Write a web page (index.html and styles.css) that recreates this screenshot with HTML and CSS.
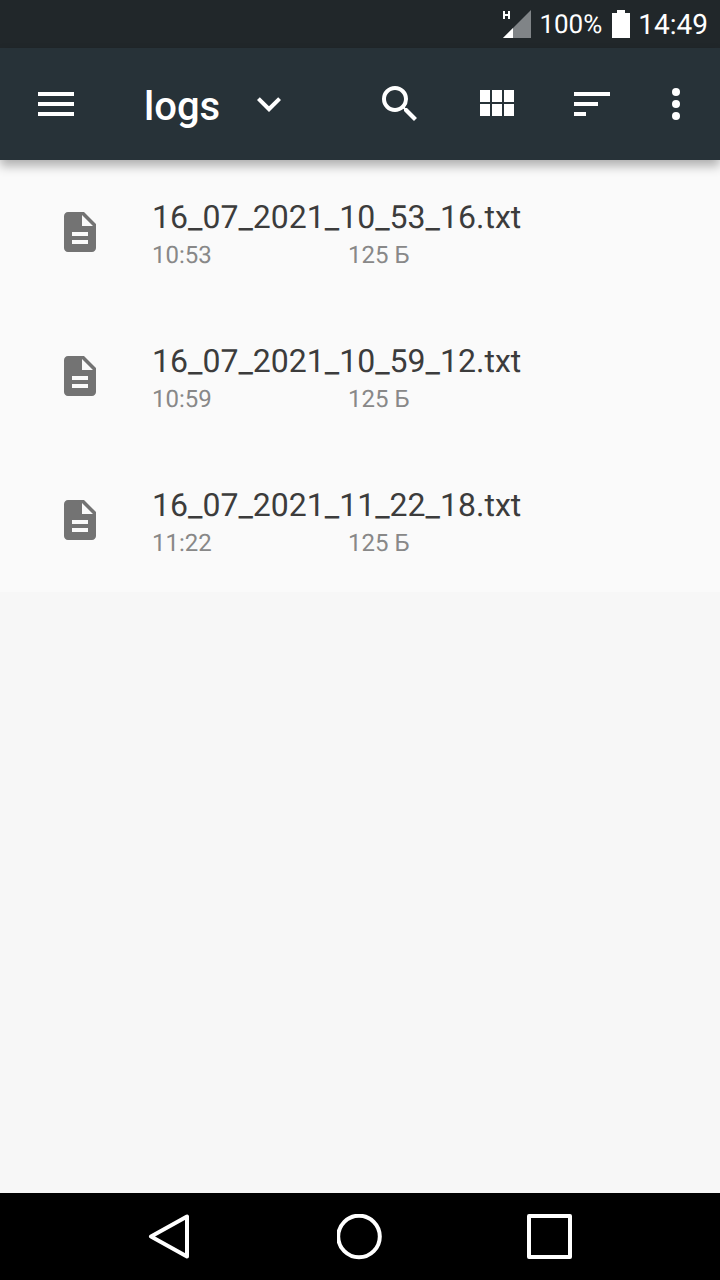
FILE: index.html
```html
<!DOCTYPE html>
<html lang="ru">
<head>
<meta charset="utf-8">
<meta name="viewport" content="width=device-width, initial-scale=1">
<title>logs</title>
<link rel="stylesheet" href="styles.css">
</head>
<body>
<div class="screen">
  <div class="status-bar">
    <svg class="signal" viewBox="0 0 28 28" aria-hidden="true">
      <path fill="#808487" d="M28 0v28H0z"/>
      <path fill="#fff" d="M10 18v10H0z"/>
      <path stroke="#fff" stroke-width="2" fill="none" d="M1 1v8M6 1v8M1 5h5"/>
    </svg>
    <span class="battery-level">100%</span>
    <svg class="battery" viewBox="0 0 18 28" aria-hidden="true"><path fill="#fff" d="M5 0h8v3h5v25H0V3h5z"/></svg>
    <time class="clock">14:49</time>
  </div>

  <header class="app-bar">
    <button class="bar-button menu-button" type="button" aria-label="Меню">
      <svg class="icon" viewBox="0 0 24 24"><path d="M3 18h18v-2H3v2zm0-5h18v-2H3v2zm0-7v2h18V6H3z"/></svg>
    </button>
    <button class="folder" type="button">
      <span class="folder-name">logs</span>
      <svg class="icon" viewBox="0 0 24 24"><path d="M16.59 8.59 12 13.17 7.41 8.59 6 10l6 6 6-6z"/></svg>
    </button>
    <button class="bar-button" type="button" aria-label="Поиск">
      <svg class="icon" viewBox="0 0 24 24"><path d="M15.5 14h-.79l-.28-.27A6.471 6.471 0 0 0 16 9.5 6.5 6.5 0 1 0 9.5 16c1.61 0 3.09-.59 4.23-1.57l.27.28v.79l5 4.99L20.49 19l-4.99-5zm-6 0C7.01 14 5 11.99 5 9.5S7.01 5 9.5 5 14 7.01 14 9.5 11.99 14 9.5 14z"/></svg>
    </button>
    <button class="bar-button" type="button" aria-label="Сетка">
      <svg class="icon" viewBox="0 0 24 24"><path d="M4 11h5V5H4v6zm0 7h5v-6H4v6zm6 0h5v-6h-5v6zm6 0h5v-6h-5v6zm-6-7h5V5h-5v6zm6-6v6h5V5h-5z"/></svg>
    </button>
    <button class="bar-button" type="button" aria-label="Сортировка">
      <svg class="icon" viewBox="0 0 24 24"><path d="M3 18h6v-2H3v2zM3 6v2h18V6H3zm0 7h12v-2H3v2z"/></svg>
    </button>
    <button class="bar-button more-button" type="button" aria-label="Ещё">
      <svg class="icon" viewBox="0 0 24 24"><circle cx="12" cy="6" r="2"/><circle cx="12" cy="12" r="2"/><circle cx="12" cy="18" r="2"/></svg>
    </button>
  </header>

  <main class="content">
    <ul class="file-list">
      <li class="file">
        <svg class="icon file-icon" viewBox="0 0 24 24" aria-hidden="true"><path d="M14 2H6c-1.1 0-1.99.9-1.99 2L4 20c0 1.1.89 2 1.99 2H18c1.1 0 2-.9 2-2V8l-6-6zm2 16H8v-2h8v2zm0-4H8v-2h8v2zm-3-5V3.5L18.5 9H13z"/></svg>
        <div class="file-text">
          <span class="file-name">16_07_2021_10_53_16.txt</span>
          <div class="file-meta"><time>10:53</time><span>125 Б</span></div>
        </div>
      </li>
      <li class="file">
        <svg class="icon file-icon" viewBox="0 0 24 24" aria-hidden="true"><path d="M14 2H6c-1.1 0-1.99.9-1.99 2L4 20c0 1.1.89 2 1.99 2H18c1.1 0 2-.9 2-2V8l-6-6zm2 16H8v-2h8v2zm0-4H8v-2h8v2zm-3-5V3.5L18.5 9H13z"/></svg>
        <div class="file-text">
          <span class="file-name">16_07_2021_10_59_12.txt</span>
          <div class="file-meta"><time>10:59</time><span>125 Б</span></div>
        </div>
      </li>
      <li class="file">
        <svg class="icon file-icon" viewBox="0 0 24 24" aria-hidden="true"><path d="M14 2H6c-1.1 0-1.99.9-1.99 2L4 20c0 1.1.89 2 1.99 2H18c1.1 0 2-.9 2-2V8l-6-6zm2 16H8v-2h8v2zm0-4H8v-2h8v2zm-3-5V3.5L18.5 9H13z"/></svg>
        <div class="file-text">
          <span class="file-name">16_07_2021_11_22_18.txt</span>
          <div class="file-meta"><time>11:22</time><span>125 Б</span></div>
        </div>
      </li>
    </ul>
  </main>

  <nav class="nav-bar">
    <button class="nav-button" type="button" aria-label="Назад">
      <svg class="nav-icon" viewBox="0 0 46 46"><path d="M40 2.500v40L4 22.500z"/></svg>
    </button>
    <button class="nav-button" type="button" aria-label="Домой">
      <svg class="nav-icon" viewBox="0 0 46 46"><circle cx="22" cy="22.500" r="20.800"/></svg>
    </button>
    <button class="nav-button" type="button" aria-label="Недавние">
      <svg class="nav-icon" viewBox="0 0 46 46"><path d="M2 2h41v41H2z"/></svg>
    </button>
  </nav>
</div>
</body>
</html>
```

FILE: styles.css
```css
* {
  box-sizing: border-box;
}

body {
  margin: 0;
  font-family: Roboto, "Noto Sans", sans-serif;
  text-rendering: geometricPrecision;
  background: #f7f7f7;
}

button {
  margin: 0;
  padding: 0;
  border: 0;
  background: none;
  color: inherit;
  font: inherit;
}

.screen {
  display: flex;
  flex-direction: column;
  min-height: 100vh;
}

.status-bar {
  display: flex;
  align-items: center;
  justify-content: flex-end;
  height: 48px;
  padding: 0 12px;
  background: #21272a;
  color: #fff;
}

.signal {
  width: 28px;
  height: 28px;
  margin-right: 8px;
}

.battery-level {
  padding-top: 2px;
  margin-right: 10px;
  font-size: 26px;
  line-height: 32px;
}

.battery {
  width: 18px;
  height: 28px;
  margin-right: 8px;
}

.clock {
  padding-top: 2px;
  font-size: 28px;
  line-height: 32px;
}

.app-bar {
  position: relative;
  display: flex;
  align-items: center;
  height: 112px;
  padding-right: 8px;
  background: #273238;
  color: #fff;
  box-shadow: 0 6px 10px rgba(0, 0, 0, 0.3);
}

.icon {
  display: block;
  flex: none;
  width: 48px;
  height: 48px;
  fill: currentColor;
}

.bar-button {
  display: flex;
  justify-content: center;
  width: 96px;
}

.menu-button {
  width: 112px;
}

.more-button {
  width: 72px;
}

.folder {
  display: flex;
  flex: 1;
  align-items: center;
  gap: 25px;
  padding-left: 32px;
}

.folder-name {
  padding-top: 6px;
  font-size: 40px;
  font-weight: 500;
  line-height: 42px;
}

.content {
  flex: 1;
}

.file-list {
  margin: 0;
  padding: 0;
  list-style: none;
  background: #fafafa;
}

.file {
  display: flex;
  align-items: center;
  gap: 48px;
  height: 144px;
  padding: 0 32px 0 56px;
}

.file-icon {
  color: #737373;
}

.file-text {
  flex: 1;
  padding-top: 6px;
}

.file-name {
  display: block;
  color: #3c3c3c;
  font-size: 32px;
  line-height: 40px;
}

.file-meta {
  display: grid;
  grid-template-columns: 196px 1fr;
  color: #888;
  font-size: 24px;
  line-height: 36px;
}

.nav-bar {
  display: grid;
  grid-template-columns: repeat(3, 190px);
  justify-content: center;
  height: 87px;
  background: #000;
}

.nav-button {
  display: grid;
  place-items: center;
}

.nav-icon {
  width: 46px;
  height: 46px;
  fill: none;
  stroke: #fff;
  stroke-width: 4;
  stroke-linejoin: round;
}
```
